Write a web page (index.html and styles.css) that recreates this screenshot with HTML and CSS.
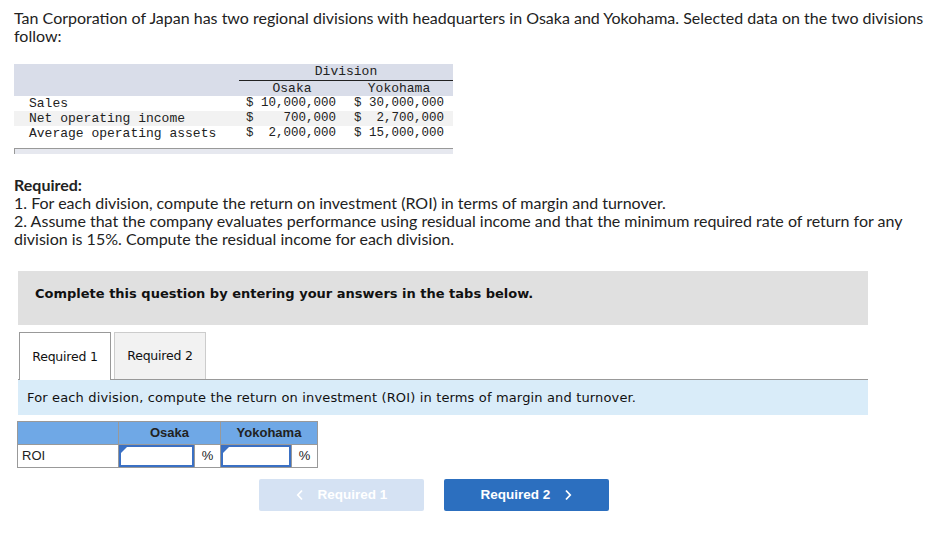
FILE: index.html
```html
<!DOCTYPE html>
<html>
<head>
<meta charset="utf-8">
<link rel="stylesheet" href="styles.css">
</head>
<body>
<div class="page">
  <p class="intro">Tan Corporation of Japan has two regional divisions with headquarters in Osaka and Yokohama. Selected data on the two divisions follow:</p>

  <div class="data">
    <table class="dtable">
      <colgroup><col class="c1"><col class="c2"><col class="c3"></colgroup>
      <tr class="hrow1"><td rowspan="2"></td><th colspan="2" class="divhead">Division</th></tr>
      <tr class="hrow2"><th>Osaka</th><th>Yokohama</th></tr>
      <tr class="r"><td class="lbl">Sales</td><td class="val">$ 10,000,000</td><td class="val">$ 30,000,000</td></tr>
      <tr class="r alt"><td class="lbl">Net operating income</td><td class="val">$    700,000</td><td class="val">$  2,700,000</td></tr>
      <tr class="r"><td class="lbl">Average operating assets</td><td class="val">$  2,000,000</td><td class="val">$ 15,000,000</td></tr>
    </table>
    <div class="dfoot"></div>
  </div>

  <div class="req">
    <p class="reqtitle">Required:</p>
    <p>1. For each division, compute the return on investment (ROI) in terms of margin and turnover.</p>
    <p>2. Assume that the company evaluates performance using residual income and that the minimum required rate of return for any division is 15%. Compute the residual income for each division.</p>
  </div>

  <div class="notice">Complete this question by entering your answers in the tabs below.</div>

  <div class="tabs">
    <div class="tab active">Required 1</div>
    <div class="tab">Required 2</div>
  </div>
  <div class="instr">For each division, compute the return on investment (ROI) in terms of margin and turnover.</div>

  <table class="roi">
    <tr class="rhead"><th class="rl"></th><th colspan="2" class="ro">Osaka</th><th colspan="2" class="ry">Yokohama</th></tr>
    <tr class="rrow">
      <td class="rlabel">ROI</td>
      <td class="inp w1"><div class="box"><span class="tri"></span></div></td>
      <td class="pct">%</td>
      <td class="inp w2"><div class="box"><span class="tri"></span></div></td>
      <td class="pct">%</td>
    </tr>
  </table>

  <div class="nav">
    <div class="btn disabled">
      <svg width="8" height="12" viewBox="0 0 8 12"><path d="M6 1.5 L1.8 6 L6 10.5" fill="none" stroke="#fff" stroke-width="1.8"/></svg>
      <span>Required 1</span>
    </div>
    <div class="btn primary">
      <span>Required 2</span>
      <svg width="8" height="12" viewBox="0 0 8 12"><path d="M2 1.5 L6.2 6 L2 10.5" fill="none" stroke="#fff" stroke-width="1.8"/></svg>
    </div>
  </div>
</div>
</body>
</html>
```

FILE: styles.css
```css
html, body { margin: 0; padding: 0; background: #fff; }
body { font-family: Lato, "Open Sans", sans-serif; color: #222; }
.page { padding: 9px 0 0 14px; }
p { margin: 0; }
.intro { font-size: 16px; line-height: 18px; width: 915px; }

.data { margin-top: 19px; width: 439px; }
.dtable { border-collapse: collapse; width: 439px; font-family: "Liberation Mono", monospace; font-size: 13px; color: #222; }
.dtable col.c1 { width: 225px; }
.dtable col.c2 { width: 106px; }
.dtable col.c3 { width: 108px; }
.dtable td, .dtable th { padding: 0; font-weight: normal; }
.hrow1, .hrow2 { background: #d9dde9; }
.hrow1 { height: 16px; }
.hrow2 { height: 15px; }
.divhead { border-bottom: 1px solid #222; line-height: 14px; }
.hrow2 th { line-height: 15px; }
.r { height: 15px; line-height: 15px; }
.r.alt { background: #f2f2f2; }
.lbl { padding-left: 15px !important; white-space: pre; }
.val { white-space: pre; text-align: right; padding-right: 9px !important; font-size: 12.5px; }
.dfoot { margin-top: 7px; height: 5px; border-top: 1px solid #999; border-left: 1px solid #999; background: #e6e8ef; }

.req { margin-top: 22px; font-size: 16px; line-height: 18px; width: 915px; }
.reqtitle { font-weight: bold; }

.notice { margin: 23px 0 0 4px; width: 850px; height: 54px; box-sizing: border-box; background: #e0e0e0; padding: 14px 17px; font-family: "DejaVu Sans", Verdana, sans-serif; font-weight: bold; font-size: 13px; line-height: 18px; color: #111; }

.tabs { display: flex; gap: 3px; margin: 7px 0 0 5px; width: 849px; }
.tab { width: 92px; height: 47px; box-sizing: border-box; display: flex; align-items: center; justify-content: center; font-family: "DejaVu Sans", Verdana, sans-serif; font-size: 12.5px; color: #111; background: #f2f2f2; border: 1px solid #ccc; border-bottom: none; letter-spacing: -0.2px; }
.tab.active { background: #fff; border-color: #999; height: 48px; margin-bottom: -1px; position: relative; z-index: 1; }
.instr { margin-left: 4px; width: 850px; height: 36px; box-sizing: border-box; border-top: 1px solid #999; background: #d9ecf9; padding: 0 0 0 9px; display: flex; align-items: center; font-family: "DejaVu Sans", Verdana, sans-serif; font-size: 13px; color: #111; letter-spacing: 0.15px; }

.roi { margin: 6px 0 0 3px; border-collapse: collapse; font-family: "Liberation Sans", Arial, sans-serif; font-size: 13px; color: #222; }
.roi th, .roi td { border: 1px solid #999; padding: 0; }
.rhead { height: 23px; background: #6fa8e6; }
.rhead th { font-weight: bold; text-align: center; color: #222; }
.rl { width: 100px; }
.ro { width: 100px; }
.ry { width: 96px; }
.rrow { height: 22px; }
.rlabel { padding-left: 4px !important; text-align: left; }
.inp { position: relative; }
.inp.w1 { width: 75px; }
.inp.w2 { width: 70px; }
.box { height: 22px; box-sizing: border-box; border: 2px solid #3a70c4; background: #fff; position: relative; }
.tri { position: absolute; left: 0; top: 0; width: 0; height: 0; border-top: 6px solid #3a70c4; border-right: 6px solid transparent; }
.pct { width: 25px; text-align: center; }

.nav { display: flex; gap: 20px; margin: 11px 0 0 245px; }
.btn { width: 165px; height: 32px; box-sizing: border-box; border-radius: 2px; display: flex; align-items: center; justify-content: center; gap: 14px; color: #fff; font-family: "Liberation Sans", Arial, sans-serif; font-weight: bold; font-size: 13.5px; }
.btn.disabled { background: #d5e2f3; }
.btn.primary { background: #2c6fbf; }
.btn svg { display: block; }
```
